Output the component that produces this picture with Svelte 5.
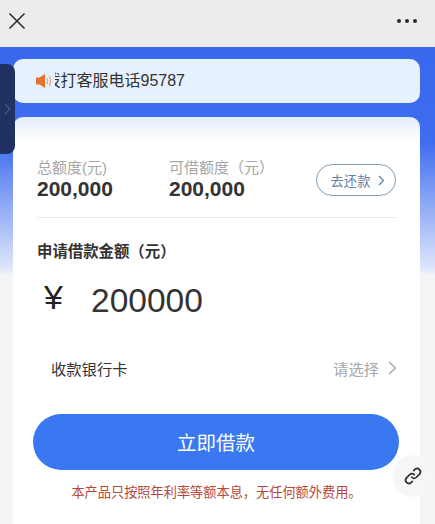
<script lang="ts">
	let amount = $state('200000');
	const limits = [
		{ label: '总额度(元)', value: '200,000' },
		{ label: '可借额度（元）', value: '200,000' }
	];
</script>

<div class="page">
	<header class="topbar">
		<svg class="close" width="18" height="18" viewBox="0 0 18 18">
			<path d="M1.5 1.5 L16.5 16.5 M16.5 1.5 L1.5 16.5" stroke="#2b2b2b" stroke-width="1.5" fill="none" />
		</svg>
		<div class="dots"><i></i><i></i><i></i></div>
	</header>

	<main class="content">
		<div class="drawer">
			<svg width="7" height="14" viewBox="0 0 7 14">
				<path d="M1 2 L6 7 L1 12" stroke="#4a5a80" stroke-width="1.2" fill="none" />
			</svg>
		</div>

		<div class="notice">
			<svg width="17" height="16" viewBox="0 0 17 16">
				<path d="M0 4.5 H3.5 L9 1 V15 L3.5 11.5 H0 Z" fill="#e2752f" />
				<path d="M11 5 Q12.6 8 11 11 M13.2 3 Q16 8 13.2 13" stroke="#e8a26e" stroke-width="1.1" fill="none" />
			</svg>
			<span class="notice-text">拨打客服电话95787</span>
		</div>

		<section class="card">
			<div class="limits">
				{#each limits as item}
					<div class="limit">
						<div class="limit-label">{item.label}</div>
						<div class="limit-value">{item.value}</div>
					</div>
				{/each}
				<button class="repay">去还款
					<svg width="7" height="11" viewBox="0 0 7 11">
						<path d="M1 1 L5.5 5.5 L1 10" stroke="#5f83a6" stroke-width="1.3" fill="none" />
					</svg>
				</button>
			</div>

			<div class="apply-title">申请借款金额（元）</div>
			<div class="amount">
				<span class="yen">¥</span>
				<span class="amount-num">{amount}</span>
			</div>

			<div class="bank">
				<span class="bank-label">收款银行卡</span>
				<span class="bank-pick">请选择
					<svg width="9" height="14" viewBox="0 0 9 14">
						<path d="M1 1 L7.5 7 L1 13" stroke="#a8a8a8" stroke-width="1.4" fill="none" />
					</svg>
				</span>
			</div>

			<button class="submit">立即借款</button>
			<p class="hint">本产品只按照年利率等额本息，无任何额外费用。</p>
		</section>

		<div class="link-btn">
			<svg width="20" height="20" viewBox="0 0 24 24" fill="none" stroke="#2f2f2f" stroke-width="2.1" stroke-linecap="round">
				<path d="M10.5 13.5a4 4 0 0 0 5.6 0l4-4a4 4 0 0 0-5.6-5.6l-1.6 1.6" />
				<path d="M13.5 10.5a4 4 0 0 0-5.6 0l-4 4a4 4 0 0 0 5.6 5.6l1.6-1.6" />
			</svg>
		</div>
	</main>
</div>

<style>
	:global(body) {
		margin: 0;
		font-family: "Liberation Sans", "Noto Sans CJK SC", sans-serif;
	}
	.page {
		width: 435px;
		height: 524px;
		overflow: hidden;
		display: flex;
		flex-direction: column;
	}
	.topbar {
		height: 47px;
		flex: none;
		background: #ececec;
		display: flex;
		align-items: center;
		justify-content: space-between;
		padding: 0 18px 0 8px;
		box-sizing: border-box;
	}
	.close {
		margin-top: -5px;
	}
	.dots {
		display: flex;
		gap: 4px;
		margin-top: -5px;
	}
	.dots i {
		width: 4px;
		height: 4px;
		border-radius: 50%;
		background: #2b2b2b;
	}
	.content {
		position: relative;
		flex: 1;
		padding: 12px 15px 0 13px;
		background: linear-gradient(#3a68ec 0, #3f6df0 95px, #dfe7fb 222px, #f4f5f7 228px, #f5f5f7 100%);
	}
	.drawer {
		position: absolute;
		left: 0;
		top: 17px;
		width: 15px;
		height: 90px;
		background: #1f3263;
		border-radius: 0 8px 8px 0;
		display: flex;
		align-items: center;
		justify-content: center;
		z-index: 2;
	}
	.notice {
		height: 44px;
		background: #e5f1fc;
		border-radius: 10px;
		display: flex;
		align-items: center;
		padding-left: 23px;
		gap: 2px;
		box-sizing: border-box;
		margin-bottom: 14px;
	}
	.notice-text {
		font-size: 16px;
		color: #333;
		width: 130px;
		overflow: hidden;
		white-space: nowrap;
		direction: rtl;
		margin-top: -5px;
	}
	.card {
		height: 420px;
		background: linear-gradient(#e2eefa 0, #ffffff 24px);
		border-radius: 10px 10px 0 0;
		padding: 40px 24px 0 24px;
		box-sizing: border-box;
	}
	.limits {
		display: flex;
		align-items: center;
		height: 60px;
		border-bottom: 1px solid #e9e9ee;
	}
	.limit {
		width: 132px;
		margin-top: -14px;
	}
	.limit-label {
		font-size: 15px;
		line-height: 18px;
		color: #a6a6a6;
	}
	.limit-value {
		font-size: 21px;
		line-height: 24px;
		font-weight: 700;
		color: #333;
	}
	.repay {
		margin-left: auto;
		margin-top: -14px;
		width: 80px;
		height: 32px;
		border: 1px solid #7f9fb8;
		border-radius: 16px;
		background: #fff;
		color: #5f83a6;
		font: inherit;
		font-size: 13.3px;
		display: flex;
		align-items: center;
		justify-content: center;
		gap: 8px;
		padding: 0 0 0 4px;
	}
	.apply-title {
		margin-top: 24px;
		font-size: 15.4px;
		line-height: 20px;
		font-weight: 700;
		color: #333;
	}
	.amount {
		display: flex;
		align-items: center;
		height: 50px;
		margin-top: 14px;
		padding-left: 7px;
		color: #333;
	}
	.yen {
		font-size: 34px;
		width: 47px;
		color: #222;
		margin-bottom: 8px;
	}
	.amount-num {
		font-size: 33.5px;
	}
	.bank {
		display: flex;
		align-items: center;
		justify-content: space-between;
		margin-top: 30px;
		height: 24px;
		padding: 0 0 0 14px;
		margin-right: -1px;
	}
	.bank-label {
		font-size: 15.3px;
		color: #333;
	}
	.bank-pick {
		font-size: 15.3px;
		color: #a8a8a8;
		display: flex;
		align-items: center;
		gap: 9px;
	}
	.submit {
		display: block;
		width: 366px;
		height: 56px;
		margin: 34px 0 0 -4px;
		border: 0;
		border-radius: 28px;
		background: #3a78f2;
		color: #fff;
		font: inherit;
		font-size: 19.5px;
		font-weight: 400;
		padding-bottom: 3px;
	}
	.hint {
		margin: 12px 0 0;
		font-size: 13.2px;
		color: #b5473c;
		text-align: center;
		white-space: nowrap;
	}
	.link-btn {
		position: absolute;
		right: 2px;
		top: 409px;
		width: 40px;
		height: 40px;
		border-radius: 50%;
		background: #f6f6f7;
		box-shadow: 0 0 6px #f6f6f7;
		display: flex;
		align-items: center;
		justify-content: center;
	}
</style>
